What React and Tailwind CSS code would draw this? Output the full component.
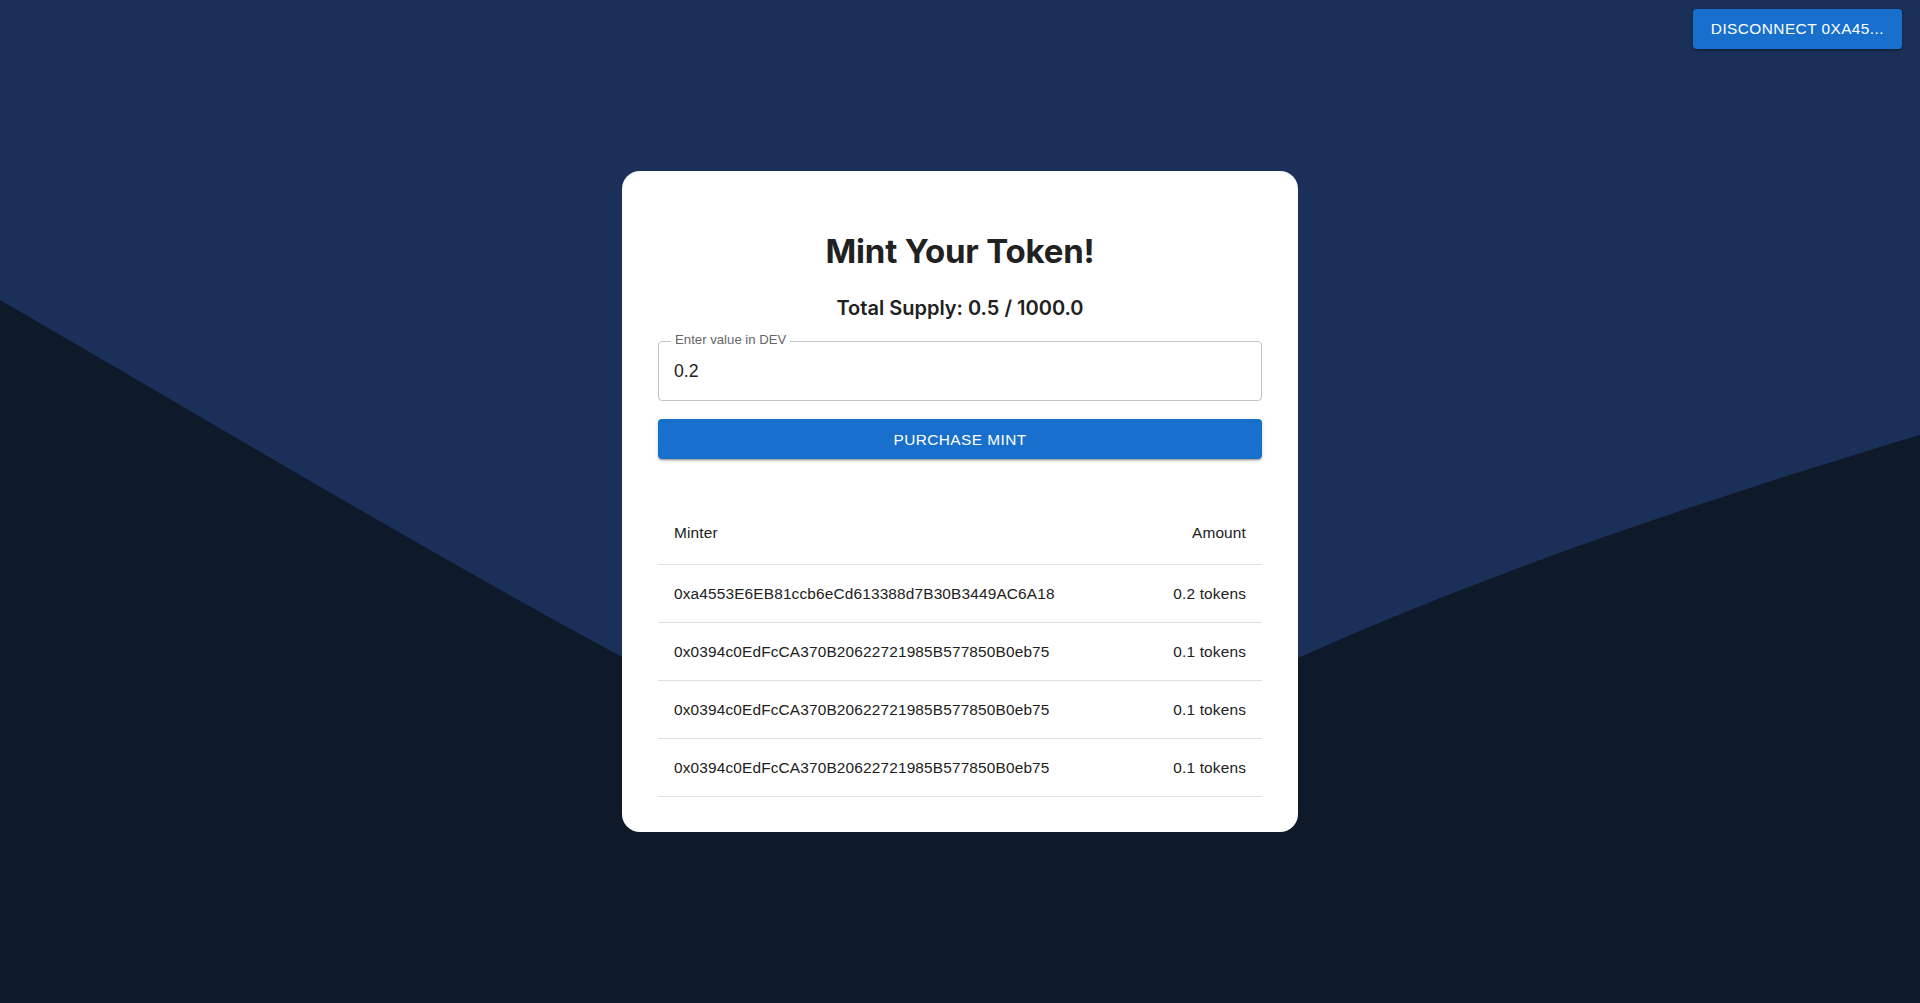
import React, { useState } from "react";

const minters = [
  { address: "0xa4553E6EB81ccb6eCd613388d7B30B3449AC6A18", amount: "0.2" },
  { address: "0x0394c0EdFcCA370B20622721985B577850B0eb75", amount: "0.1" },
  { address: "0x0394c0EdFcCA370B20622721985B577850B0eb75", amount: "0.1" },
  { address: "0x0394c0EdFcCA370B20622721985B577850B0eb75", amount: "0.1" },
];

const Wave = () => (
  <svg
    className="absolute inset-0 w-full h-full"
    viewBox="0 0 1920 1003"
    preserveAspectRatio="none"
  >
    <path
      fill="#1a3059"
      d="M0,0 L0,300 C207,420 415,545 622,657 C850,787 1070,745 1298,658 C1498,568 1720,495 1920,435 L1920,0 Z"
    />
  </svg>
);

const App = () => {
  const [value, setValue] = useState("0.2");

  return (
    <div className="relative w-full h-[1003px] overflow-hidden bg-[#0e1929] font-['Liberation_Sans',Arial,sans-serif]">
      <Wave />

      <div className="absolute top-[9px] right-[18px]">
        <button className="h-[40px] pb-[1px] px-[18px] rounded-[4px] bg-[#1870cc] text-white text-[15.4px] tracking-[0.44px] uppercase shadow-[0_3px_1px_-2px_rgba(0,0,0,0.2),0_2px_2px_0_rgba(0,0,0,0.14),0_1px_5px_0_rgba(0,0,0,0.12)]">
          Disconnect 0xa45...
        </button>
      </div>

      <main className="relative h-full flex items-center justify-center">
        <div className="w-[676px] bg-white rounded-[18px] px-[36px] pt-[35px] pb-[35px] text-[#212121]">
          <h1 className="mt-[22px] text-center font-['Inter',sans-serif] font-bold text-[33px] leading-[46px] tracking-[-0.2px]">
            Mint Your Token!
          </h1>
          <h2 className="mt-[17px] text-center font-['Inter',sans-serif] font-semibold text-[20px] leading-[35px]">
            Total Supply: 0.5 / 1000.0
          </h2>

          <div className="relative mt-[15px] h-[60px] rounded-[4px] border border-[#c4c4c4]">
            <label className="absolute left-[12px] top-[-2px] -translate-y-1/2 bg-white px-[4px] text-[13.2px] leading-none text-[#666666]">
              Enter value in DEV
            </label>
            <input
              className="w-full h-full px-[15px] pt-[1px] bg-transparent outline-none text-[17.6px] text-[#212121]"
              value={value}
              onChange={(e) => setValue(e.target.value)}
            />
          </div>

          <button className="mt-[18px] w-full h-[40px] rounded-[4px] bg-[#1870cc] text-white text-[15.4px] tracking-[0.44px] uppercase shadow-[0_3px_1px_-2px_rgba(0,0,0,0.2),0_2px_2px_0_rgba(0,0,0,0.14),0_1px_5px_0_rgba(0,0,0,0.12)]">
            Purchase Mint
          </button>

          <table className="mt-[46px] w-full text-[15.4px] tracking-[0.16px] text-[#212121]">
            <thead>
              <tr className="h-[59px] border-b border-[#e0e0e0]">
                <th className="px-4 pb-[3px] text-left font-normal">Minter</th>
                <th className="px-4 pb-[3px] text-right font-normal">Amount</th>
              </tr>
            </thead>
            <tbody>
              {minters.map((m, i) => (
                <tr key={i} className="h-[58px] border-b border-[#e0e0e0]">
                  <td className="px-4 text-left">{m.address}</td>
                  <td className="px-4 text-right">{m.amount} tokens</td>
                </tr>
              ))}
            </tbody>
          </table>
        </div>
      </main>
    </div>
  );
};

export default App;
